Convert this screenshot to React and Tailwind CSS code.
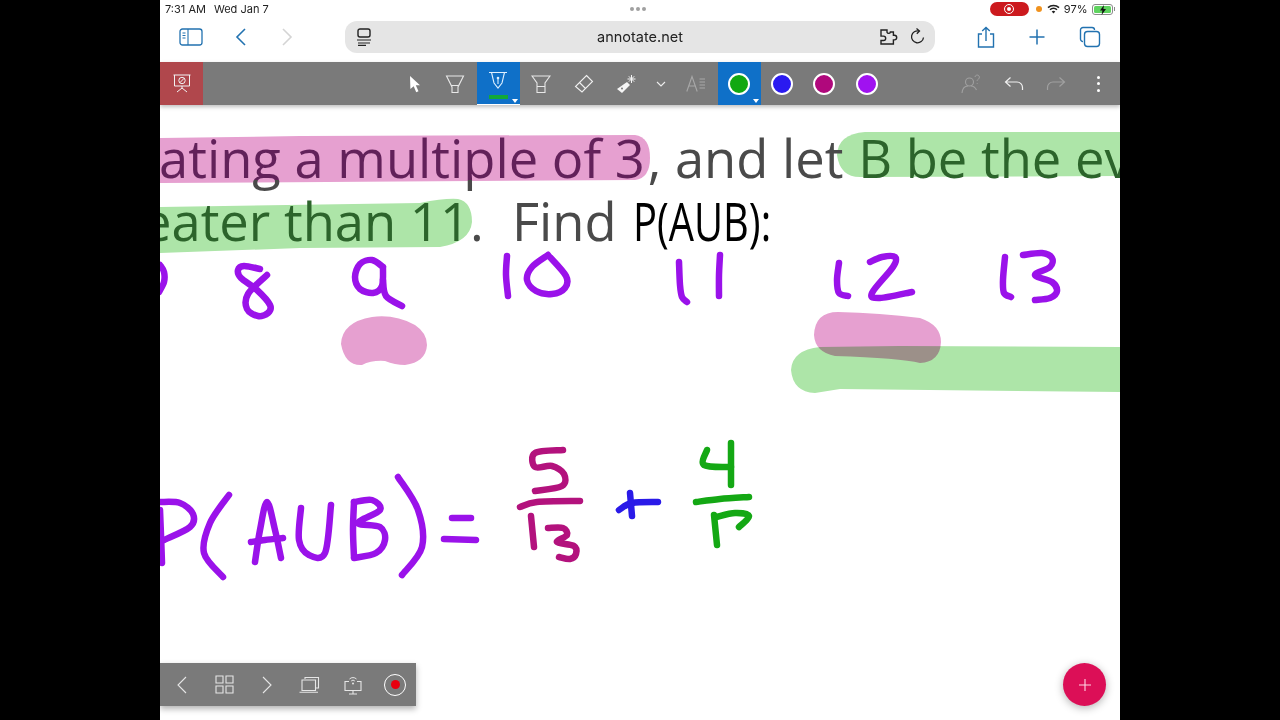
import React from "react";

function smooth(pts) {
  if (pts.length < 3) return "M" + pts.map((p) => p.join(",")).join("L");
  let d = `M${pts[0][0]},${pts[0][1]}`;
  for (let i = 0; i < pts.length - 1; i++) {
    const p0 = pts[i - 1] || pts[i];
    const p1 = pts[i];
    const p2 = pts[i + 1];
    const p3 = pts[i + 2] || p2;
    const c1 = [p1[0] + (p2[0] - p0[0]) / 6, p1[1] + (p2[1] - p0[1]) / 6];
    const c2 = [p2[0] - (p3[0] - p1[0]) / 6, p2[1] - (p3[1] - p1[1]) / 6];
    d += `C${c1[0]},${c1[1]} ${c2[0]},${c2[1]} ${p2[0]},${p2[1]}`;
  }
  return d;
}

const PURPLE = "#9a12ea";
const MAGENTA = "#b3127d";
const BLUE = "#2a1ae8";
const GREEN = "#14a814";

const ink = [
  [PURPLE, [[160, 265], [164, 272], [164, 282], [159, 292]]],
  [PURPLE, [[260, 269], [244, 266], [238, 270], [241, 278], [257, 290], [270, 305], [268, 313], [258, 316], [247, 309], [248, 294], [267, 275]]],
  [PURPLE, [[383, 267], [372, 260], [360, 264], [355, 277], [360, 289], [373, 293], [382, 286], [383, 267]]],
  [PURPLE, [[383, 280], [386, 296], [402, 306]]],
  [PURPLE, [[507, 256], [506, 275], [508, 296]]],
  [PURPLE, [[548, 255], [532, 267], [527, 280], [536, 291], [552, 294], [565, 288], [566, 276], [548, 255]]],
  [PURPLE, [[679, 262], [680, 285], [682, 297], [687, 302]]],
  [PURPLE, [[720, 255], [719, 275], [719, 296]]],
  [PURPLE, [[839, 263], [837, 280], [839, 293], [848, 296]]],
  [PURPLE, [[870, 262], [882, 257], [895, 257], [893, 267], [872, 293], [880, 298], [912, 292]]],
  [PURPLE, [[1005, 257], [1003, 280], [1004, 293], [1011, 297]]],
  [PURPLE, [[1023, 255], [1042, 253], [1052, 258], [1050, 267], [1035, 275], [1052, 282], [1057, 291], [1050, 298], [1035, 300]]],
  [PURPLE, [[162, 563], [161, 535], [160, 510]]],
  [PURPLE, [[160, 502], [180, 503], [193, 514], [190, 527], [164, 540]]],
  [PURPLE, [[229, 495], [210, 523], [204, 553], [223, 577]]],
  [PURPLE, [[255, 562], [260, 530], [267, 502], [275, 530], [281, 558]]],
  [PURPLE, [[251, 542], [265, 540], [283, 538]]],
  [PURPLE, [[301, 508], [299, 540], [309, 555], [325, 553], [331, 505]]],
  [PURPLE, [[354, 502], [353, 530], [354, 557]]],
  [PURPLE, [[354, 502], [372, 500], [380, 510], [358, 523], [380, 527], [385, 540], [376, 553], [354, 558]]],
  [PURPLE, [[398, 477], [418, 510], [422, 547], [402, 575]]],
  [PURPLE, [[452, 518], [471, 518]]],
  [PURPLE, [[444, 539], [476, 540]]],
  [MAGENTA, [[563, 450], [535, 453], [535, 467], [552, 466], [564, 474], [562, 486], [535, 491]]],
  [MAGENTA, [[520, 507], [537, 502], [580, 501]]],
  [MAGENTA, [[531, 516], [534, 547]]],
  [MAGENTA, [[548, 528], [563, 528], [567, 535], [557, 542], [574, 546], [576, 554], [570, 559], [559, 557]]],
  [BLUE, [[619, 510], [632, 503], [658, 502]]],
  [BLUE, [[630, 493], [632, 516]]],
  [GREEN, [[707, 450], [704, 465], [731, 467]]],
  [GREEN, [[731, 443], [731, 485]]],
  [GREEN, [[696, 502], [720, 499], [749, 497]]],
  [GREEN, [[714, 515], [717, 545]]],
  [GREEN, [[716, 517], [735, 513], [749, 516], [739, 527]]],
];

const Svg = ({ w = 24, h = 24, children, className = "" }) => (
  <svg width={w} height={h} viewBox={`0 0 ${w} ${h}`} fill="none" className={className}>
    {children}
  </svg>
);

const Cell = ({ active, children, caret, className = "w-[42.6px]" }) => (
  <div className={`relative h-[43px] flex items-center justify-center shrink-0 ${className} ${active ? "bg-[#0f70c8]" : ""}`}>
    {children}
    {caret && <span className="absolute right-[2px] bottom-[2px] w-0 h-0 border-l-[3px] border-r-[3px] border-t-[4px] border-l-transparent border-r-transparent border-t-white" />}
  </div>
);

const Swatch = ({ color }) => <span className={`block w-[22px] h-[22px] rounded-full border-2 border-white ${color}`} />;

const BlueStroke = "#2272b0";
const G = "#e6e6e6";

export default function App() {
  return (
    <div className="w-[1280px] h-[720px] bg-black flex justify-center overflow-hidden font-['Inter',sans-serif]">
      <div className="w-[960px] h-full bg-white flex flex-col">
        <div className="h-[18px] flex items-center justify-between pl-[5px] pr-[5px] text-[11px] text-[#222] relative shrink-0">
          <div className="flex gap-[8px]">
            <span>7:31 AM</span>
            <span>Wed Jan 7</span>
          </div>
          <div className="absolute left-[470px] top-[7px] flex gap-[2px]">
            <span className="w-[4px] h-[4px] rounded-full bg-[#a0a0a0]" />
            <span className="w-[4px] h-[4px] rounded-full bg-[#a0a0a0]" />
            <span className="w-[4px] h-[4px] rounded-full bg-[#a0a0a0]" />
          </div>
          <div className="flex items-center">
            <span className="w-[39px] h-[14px] rounded-full bg-[#cc1a1e] flex items-center justify-center mr-[7px]">
              <span className="w-[10px] h-[10px] rounded-full border border-white flex items-center justify-center">
                <span className="w-[4px] h-[4px] rounded-full bg-white" />
              </span>
            </span>
            <span className="w-[6px] h-[6px] rounded-full bg-[#f0921e] mr-[5px]" />
            <Svg w={13} h={10}>
              <path d="M1 3.6a8 8 0 0 1 11 0M3 5.8a5 5 0 0 1 7 0" stroke="#222" strokeWidth="1.5" />
              <path d="M6.5 9.6 4.7 7.6a2.6 2.6 0 0 1 3.6 0z" fill="#222" />
            </Svg>
            <span className="ml-[4px] mr-[4px]">97%</span>
            <span className="relative w-[21px] h-[11px] rounded-[3px] border border-[#8a8a8a] p-[1px] flex">
              <span className="flex-1 rounded-[1.5px] bg-[#5fd35f]" />
              <Svg w={8} h={10} className="absolute left-[6px] top-0">
                <path d="M5 0 1 5.6h2.4L2.6 10 7 4H4.4z" fill="#111" />
              </Svg>
            </span>
            <span className="w-[1.5px] h-[4px] bg-[#8a8a8a] ml-[1px]" />
          </div>
        </div>

        <div className="h-[44px] flex items-center shrink-0 relative pb-[6px] pl-[19px]">
          <Svg w={24} h={18}>
            <rect x="1" y="1" width="22" height="16" rx="2.5" stroke={BlueStroke} strokeWidth="1.3" />
            <path d="M9 1v16M3.5 5h3M3.5 7.5h3M3.5 10h3" stroke={BlueStroke} strokeWidth="1.1" />
          </Svg>
          <Svg w={12} h={20} className="ml-[32px]">
            <path d="M10 2 2 10l8 8" stroke={BlueStroke} strokeWidth="1.6" />
          </Svg>
          <Svg w={12} h={20} className="ml-[34px]">
            <path d="M2 2l8 8-8 8" stroke="#d4d4d4" strokeWidth="1.6" />
          </Svg>
          <div className="ml-[52px] w-[590px] h-[32px] rounded-[12px] bg-[#e5e5e5] flex items-center justify-between pl-[11px] pr-[9px] relative">
            <Svg w={16} h={18}>
              <rect x="2" y="1" width="12" height="8" rx="2" stroke="#222" strokeWidth="1.4" />
              <path d="M1 12h14M2 15h12M2 17.4h8" stroke="#222" strokeWidth="1.2" />
            </Svg>
            <span className="absolute left-0 right-0 text-center text-[14.5px] text-[#222]">annotate.net</span>
            <div className="flex items-center gap-[11px] relative">
              <Svg w={20} h={16}>
                <path d="M2 1h6v2.2a1.8 1.8 0 0 0 3.4 0V3h3v3.3h1a2.3 2.3 0 0 1 0 4.6h-1V15H2v-3.500h2.500a2.200 2.200 0 0 0 0-4.400H2z" stroke="#222" strokeWidth="1.4" />
              </Svg>
              <Svg w={16} h={18}>
                <path d="M13.5 9.500a6 6 0 1 1-4.500-6.500H7.500" stroke="#222" strokeWidth="1.3" />
                <path d="M6.5 0.500 9.500 3 6.800 5.800" stroke="#222" strokeWidth="1.3" />
              </Svg>
            </div>
          </div>
          <div className="ml-auto flex items-center pr-[19px]">
            <Svg w={20} h={22} className="mr-[32px]">
              <path d="M6 8H2.500v13h15V8H14M10 15V1.500M6.200 5 10 1.500 13.800 5" stroke={BlueStroke} strokeWidth="1.4" />
            </Svg>
            <Svg w={18} h={18} className="mr-[33px]">
              <path d="M9 1.500v15M1.500 9h15" stroke={BlueStroke} strokeWidth="1.5" />
            </Svg>
            <Svg w={22} h={22}>
              <rect x="5.5" y="5.5" width="15" height="15" rx="3" stroke={BlueStroke} strokeWidth="1.4" />
              <path d="M4 15.500A2.500 2.500 0 0 1 1.500 13V4A2.500 2.500 0 0 1 4 1.500h9A2.500 2.500 0 0 1 15.500 4" stroke={BlueStroke} strokeWidth="1.4" />
            </Svg>
          </div>
        </div>

        <div className="h-[43px] bg-[#7a7a7a] flex shadow-[0_2px_4px_rgba(0,0,0,0.25)] relative z-10 shrink-0">
          <div className="w-[43px] h-full bg-[#b0474c] flex items-center justify-center">
            <Svg w={18} h={19}>
              <path d="M0.500 1h17M1.500 1v11h15V1M9 12v2M4 18l5-4 5 4" stroke="#f2f2f2" strokeWidth="1" />
              <circle cx="9" cy="6.5" r="3.2" stroke="#f2f2f2" strokeWidth="1" />
              <path d="M6.800 8.800l4.400-4.600" stroke="#f2f2f2" strokeWidth="1" />
            </Svg>
          </div>
          <div className="ml-[189px] flex">
            <Cell>
              <Svg w={14} h={18} className="ml-[4px]">
                <path d="M2 1l10 9.200H7.800l2.700 6-2.300 1-2.500-6L2.400 14z" fill="#fff" />
              </Svg>
            </Cell>
            <Cell>
              <Svg w={20} h={20} className="-ml-[2px]">
                <path d="M1.500 2h17L13 13v5.500H7V13zM6 11.500h8" stroke="#e8e8e8" strokeWidth="1.1" />
              </Svg>
            </Cell>
            <Cell active caret>
              <Svg w={20} h={22} className="-mt-[3px]">
                <path d="M1 1.500h18M3.500 1.500h13L14 12l-4 5-4-5zM10 13V7" stroke="#dff0ff" strokeWidth="1.1" />
                <circle cx="10" cy="7" r="1.3" fill="#dff0ff" />
              </Svg>
              <span className="absolute left-[12px] bottom-[6px] w-[19px] h-[4px] bg-[#12a838]" />
              <span className="absolute left-0 right-0 bottom-0 h-[1.5px] bg-white" />
            </Cell>
            <Cell>
              <Svg w={20} h={20}>
                <path d="M1 2h18l-5 7v9.500H6V9zM6 12.500h8" stroke="#e8e8e8" strokeWidth="1.1" />
              </Svg>
            </Cell>
            <Cell>
              <Svg w={20} h={20}>
                <path d="M12.500 1.500 18.500 7.500 8 18 1.500 12.500z" stroke="#f0f0f0" strokeWidth="1.1" />
                <path d="M5.500 8.500l6 6" stroke="#f0f0f0" strokeWidth="1.1" />
              </Svg>
            </Cell>
            <Cell>
              <Svg w={20} h={20}>
                <path d="M1 15l10-7 3 3-8 8z" fill="#f5f5f5" />
                <circle cx="6" cy="14.5" r="1" fill="#7a7a7a" />
                <path d="M15.500 1v8M11.500 5h8M12.800 2.300l5.400 5.400M18.200 2.300l-5.400 5.400" stroke="#f5f5f5" strokeWidth="1" />
              </Svg>
            </Cell>
            <Cell className="w-[27px]">
              <Svg w={10} h={6}>
                <path d="M1 1l4 4 4-4" stroke="#eee" strokeWidth="1.1" />
              </Svg>
            </Cell>
            <Cell className="w-[43.4px]">
              <Svg w={20} h={18}>
                <path d="M0.800 16.500 6 1.500l5.200 15M2.500 11h7" stroke="#a8a8a8" strokeWidth="1.1" />
                <path d="M13.500 4h5.500M13.500 7h5.500M13.500 10h5.500M13.500 13h5.500" stroke="#a8a8a8" strokeWidth="1" />
              </Svg>
            </Cell>
            <Cell active caret>
              <Swatch color="bg-[#12a812]" />
            </Cell>
            <Cell>
              <Swatch color="bg-[#2a1af0]" />
            </Cell>
            <Cell>
              <Swatch color="bg-[#b0087c]" />
            </Cell>
            <Cell>
              <Swatch color="bg-[#a012f0]" />
            </Cell>
          </div>
          <div className="ml-auto flex">
            <Cell>
              <Svg w={20} h={20}>
                <circle cx="8.5" cy="8" r="4" stroke="#a0a0a0" strokeWidth="1.1" />
                <path d="M1 19c.5-5 3.500-7 6-7M10 12c3 0 4.500 2 5.500 4" stroke="#a0a0a0" strokeWidth="1.1" />
                <path d="M14 3a2.200 2.200 0 1 1 3.500 2c-1 .6-1.300 1.200-1.300 2M16.200 9v.8" stroke="#a0a0a0" strokeWidth="1" />
              </Svg>
            </Cell>
            <Cell>
              <Svg w={20} h={16}>
                <path d="M6.500 1.500 1.500 6l5 4.500M1.500 6H13a5.500 5.500 0 0 1 5.500 5.500V14" stroke="#f0f0f0" strokeWidth="1.2" />
              </Svg>
            </Cell>
            <Cell>
              <Svg w={20} h={16}>
                <path d="M13.500 1.500l5 4.500-5 4.500M18.500 6H7a5.500 5.500 0 0 0-5.500 5.500V14" stroke="#a0a0a0" strokeWidth="1.2" />
              </Svg>
            </Cell>
            <Cell>
              <span className="flex flex-col gap-[3.5px]">
                <span className="w-[3px] h-[3px] rounded-full bg-white" />
                <span className="w-[3px] h-[3px] rounded-full bg-white" />
                <span className="w-[3px] h-[3px] rounded-full bg-white" />
              </span>
            </Cell>
          </div>
        </div>

        <div className="flex-1 relative overflow-hidden bg-white">
          <svg className="absolute left-0 top-0" width="960" height="615" viewBox="160 105 960 615" fill="none">
            <path d="M160,138 L300,136 L635,135 Q650,137 650,158 Q650,178 635,180 L160,183Z" fill="#e6a0d0" />
            <path d="M1120,132 L865,132 Q838,134 837,155 Q840,177 860,177 L1120,176Z" fill="#ade5a8" />
            <path d="M160,207 L420,203 Q445,198 458,199 Q472,202 472,222 Q470,242 440,247 L300,248 L160,253Z" fill="#ade5a8" />
            <path d="M341,344 Q342,322 372,317 Q395,314 415,325 Q427,333 427,345 Q426,362 405,365 Q395,365 385,361 Q372,360 362,365 Q345,366 341,344Z" fill="#e6a0d0" />
            <path d="M814,335 Q815,312 838,312 Q880,313 920,318 Q941,325 941,342 Q940,362 920,363 Q900,358 835,356 Q815,352 814,335Z" fill="#e6a0d0" />
            <path className="mix-blend-multiply" d="M1120,347 L900,346 L820,347 Q792,350 791,370 Q793,392 815,393 L840,389 L1120,392Z" fill="#ade5a8" />
          </svg>

          <div className="relative pt-[21px] text-[52.5px] leading-[63px] font-['Open_Sans',sans-serif] text-[#4a4a4a] whitespace-pre">
            <div className="-ml-[1px]">
              <span className="bg-clip-text text-transparent bg-[linear-gradient(#62215a_0,#62215a_58px,#4a4a4a_58px)]">ating a multiple of 3</span>
              <span className="ml-[3px]">, and let </span><span className="ml-[1px] text-[#2c642b]">B be the event</span>
            </div>
            <div className="-ml-[18px]">
              <span className="text-[#2c642b]">eater than 11</span>.  <span className="ml-[1px]">Find</span> <span className="inline-block ml-[3px] origin-left scale-x-[0.76] text-black">P(AUB):</span>
            </div>
          </div>

          <svg className="absolute left-0 top-0" width="960" height="615" viewBox="160 105 960 615" fill="none">
            {ink.map(([c, pts], i) => (
              <path key={i} d={smooth(pts)} stroke={c} strokeWidth="6.5" strokeLinecap="round" strokeLinejoin="round" />
            ))}
          </svg>

          <div className="absolute left-0 bottom-[14px] w-[256px] h-[43px] bg-[#7a7a7a] shadow-[0_3px_6px_rgba(0,0,0,0.3)] flex items-center">
            <div className="w-[43px] flex justify-center">
              <Svg w={12} h={18}>
                <path d="M10 1 2 9l8 8" stroke={G} strokeWidth="1.1" />
              </Svg>
            </div>
            <div className="w-[42px] flex justify-center">
              <Svg w={19} h={19}>
                <path d="M1 1h7v7H1zM11 1h7v7h-7zM1 11h7v7H1zM11 11h7v7h-7z" stroke={G} strokeWidth="1.1" />
              </Svg>
            </div>
            <div className="w-[43px] flex justify-center">
              <Svg w={12} h={18}>
                <path d="M2 1l8 8-8 8" stroke={G} strokeWidth="1.1" />
              </Svg>
            </div>
            <div className="w-[43px] flex justify-center">
              <Svg w={21} h={17}>
                <path d="M6 3V1.500h13.500V12H17" stroke={G} strokeWidth="1.1" />
                <path d="M3 4h13.500v10.500H3zM0.500 16.200h18.500" stroke={G} strokeWidth="1.1" />
              </Svg>
            </div>
            <div className="w-[43px] flex justify-center">
              <Svg w={20} h={20}>
                <path d="M6 6.500H2V15.500H18V6.500H14M10 15.500V18.500M6 19h8" stroke={G} strokeWidth="1.1" />
                <path d="M6.500 4a5 5 0 0 1 7 0M8.200 6a2.500 2.500 0 0 1 3.600 0" stroke={G} strokeWidth="1" />
                <circle cx="10" cy="8.5" r="1" fill={G} />
              </Svg>
            </div>
            <div className="w-[42px] flex justify-center">
              <span className="w-[22px] h-[22px] rounded-full border border-white flex items-center justify-center">
                <span className="w-[9px] h-[9px] rounded-full bg-[#e8000f]" />
              </span>
            </div>
          </div>

          <div className="absolute right-[14px] bottom-[14px] w-[43px] h-[43px] rounded-full bg-[#dc0f57] shadow-[0_2px_8px_rgba(0,0,0,0.3)] flex items-center justify-center">
            <Svg w={14} h={14}>
              <path d="M7 1v12M1 7h12" stroke="#ffd6e4" strokeWidth="1.1" />
            </Svg>
          </div>
        </div>
      </div>
    </div>
  );
}
